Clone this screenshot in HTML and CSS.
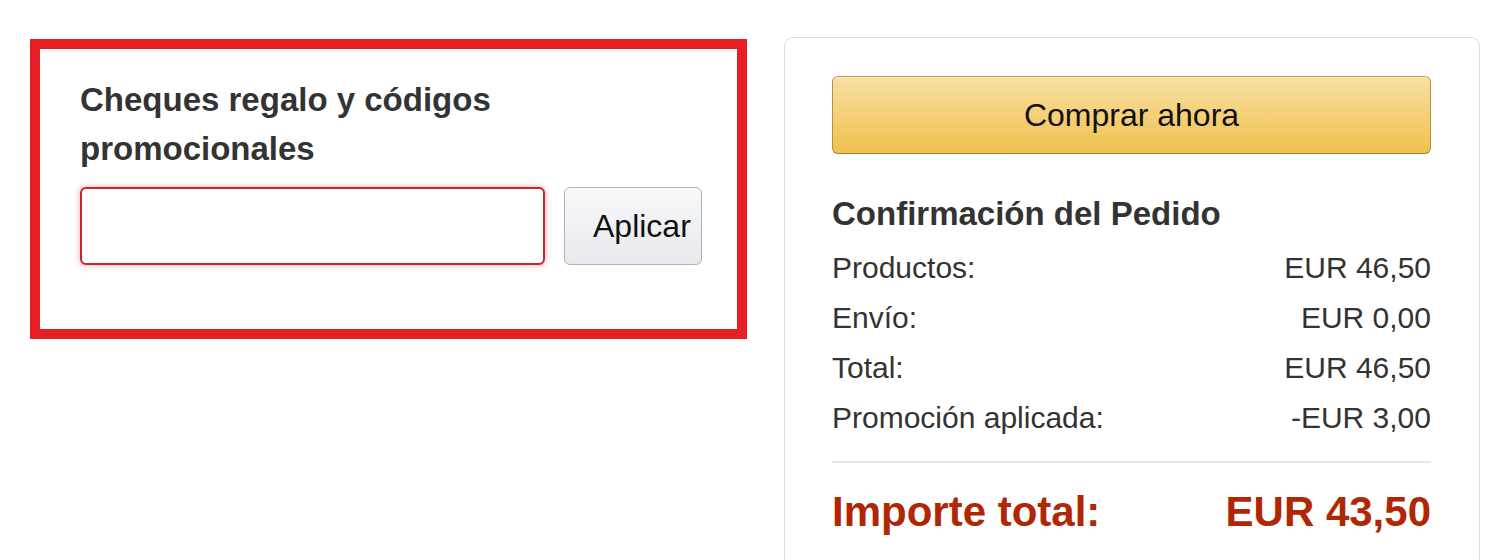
FILE: index.html
```html
<!DOCTYPE html>
<html lang="es">
<head>
<meta charset="utf-8">
<title>Pedido</title>
<link rel="stylesheet" href="styles.css">
</head>
<body>
<div class="page">
  <section class="promo">
    <h2 class="promo-title">Cheques regalo y códigos promocionales</h2>
    <div class="promo-form">
      <input class="promo-input" type="text" aria-label="Código">
      <button class="btn-apply" type="button">Aplicar</button>
    </div>
  </section>
  <aside class="summary">
    <button class="btn-buy" type="button">Comprar ahora</button>
    <h3 class="summary-title">Confirmación del Pedido</h3>
    <div class="row"><span>Productos:</span><span>EUR 46,50</span></div>
    <div class="row"><span>Envío:</span><span>EUR 0,00</span></div>
    <div class="row"><span>Total:</span><span>EUR 46,50</span></div>
    <div class="row"><span>Promoción aplicada:</span><span>-EUR 3,00</span></div>
    <hr class="divider">
    <div class="row grand"><span>Importe total:</span><span>EUR 43,50</span></div>
  </aside>
</div>
</body>
</html>
```

FILE: styles.css
```css
* { box-sizing: border-box; }
html, body { margin: 0; padding: 0; background: #fff; }
body {
  font-family: "Liberation Sans", Arial, Helvetica, sans-serif;
  color: #333;
  width: 1500px;
  height: 560px;
  overflow: hidden;
}
.page {
  display: flex;
  align-items: flex-start;
  gap: 37px;
  padding: 37px 0 0 30px;
}
.promo {
  margin-top: 2px;
  width: 717px;
  height: 300px;
  border: 10px solid #e61e26;
  padding: 26px 30px 0 40px;
}
.promo-title {
  margin: 0;
  font-size: 33px;
  line-height: 49px;
  font-weight: bold;
  color: #333;
  width: 460px;
}
.promo-form {
  display: flex;
  gap: 19px;
  margin-top: 14px;
}
.promo-input {
  flex: none;
  width: 465px;
  height: 78px;
  border: 2px solid #c8252c;
  border-radius: 6px;
  box-shadow: 0 0 5px 1px rgba(230, 60, 60, 0.35);
  background: #fff;
  outline: none;
  margin: 0;
}
.btn-apply {
  flex: none;
  width: 138px;
  height: 78px;
  margin: 0;
  padding: 0 0 0 28px;
  text-align: left;
  font-family: "Liberation Sans", Arial, sans-serif;
  font-size: 32px;
  color: #111;
  background: linear-gradient(#f7f8fa, #e7e9ec);
  border: 1px solid #adb1b8;
  border-radius: 6px;
  box-shadow: 0 1px 0 rgba(255,255,255,.6) inset;
}
.summary {
  width: 696px;
  height: 523px;
  border: 1px solid #dddddd;
  border-bottom: 0;
  border-radius: 9px 9px 0 0;
  padding: 38px 48px 0 47px;
}
.btn-buy {
  display: block;
  width: 100%;
  height: 78px;
  margin: 0;
  font-family: "Liberation Sans", Arial, sans-serif;
  font-size: 32px;
  color: #111;
  background: linear-gradient(#f7dfa5, #f0c14b);
  border: 1px solid #a88734;
  border-color: #c6a046 #b8913a #9c7e31;
  border-radius: 6px;
  box-shadow: 0 1px 0 rgba(255,255,255,.4) inset;
}
.summary-title {
  margin: 35px 0 4px;
  font-size: 33px;
  line-height: 50px;
  font-weight: bold;
  color: #333;
}
.row {
  display: flex;
  justify-content: space-between;
  font-size: 30px;
  line-height: 50px;
  color: #333;
}
.divider {
  border: 0;
  border-top: 2px solid #e7e7e7;
  margin: 18px 0 25px;
}
.row.grand {
  font-size: 42px;
  line-height: 48px;
  font-weight: bold;
  color: #b12704;
}
```
